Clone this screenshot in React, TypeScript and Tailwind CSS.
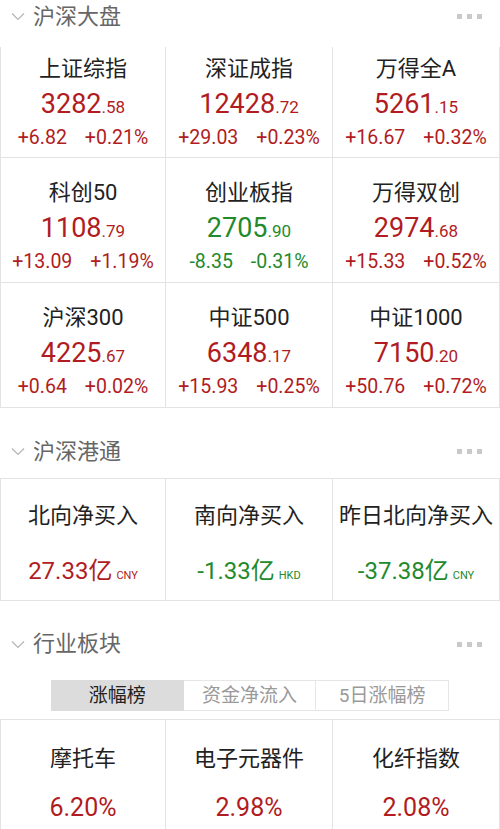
import React from "react";

const RED = "text-[#b01c22]";
const GREEN = "text-[#238a2c]";

type Idx = { name: string; int: string; dec: string; chg: string; pct: string; up: boolean };

const rows: Idx[][] = [
  [
    { name: "上证综指", int: "3282", dec: "58", chg: "+6.82", pct: "+0.21%", up: true },
    { name: "深证成指", int: "12428", dec: "72", chg: "+29.03", pct: "+0.23%", up: true },
    { name: "万得全A", int: "5261", dec: "15", chg: "+16.67", pct: "+0.32%", up: true },
  ],
  [
    { name: "科创50", int: "1108", dec: "79", chg: "+13.09", pct: "+1.19%", up: true },
    { name: "创业板指", int: "2705", dec: "90", chg: "-8.35", pct: "-0.31%", up: false },
    { name: "万得双创", int: "2974", dec: "68", chg: "+15.33", pct: "+0.52%", up: true },
  ],
  [
    { name: "沪深300", int: "4225", dec: "67", chg: "+0.64", pct: "+0.02%", up: true },
    { name: "中证500", int: "6348", dec: "17", chg: "+15.93", pct: "+0.25%", up: true },
    { name: "中证1000", int: "7150", dec: "20", chg: "+50.76", pct: "+0.72%", up: true },
  ],
];

function Chevron() {
  return (
    <svg width="14" height="9" viewBox="0 0 14 9" className="mr-[8px]">
      <path d="M1 1.5 L7 7.5 L13 1.5" fill="none" stroke="#b5b5b5" strokeWidth="1.2" />
    </svg>
  );
}

function Dots() {
  return (
    <div className="flex gap-[5px]">
      <div className="w-[5px] h-[5px] bg-[#c9c9c9]" />
      <div className="w-[5px] h-[5px] bg-[#c9c9c9]" />
      <div className="w-[5px] h-[5px] bg-[#c9c9c9]" />
    </div>
  );
}

function Header({ title, dots, cls }: { title: string; dots: boolean; cls: string }) {
  return (
    <div className={"flex items-center pl-[11px] pr-[18px] " + cls}>
      <Chevron />
      <div className="text-[22px] leading-[30px] text-[#666]">{title}</div>
      <div className="flex-1" />
      {dots && <Dots />}
    </div>
  );
}

function IndexCell({ d, pt, first }: { d: Idx; pt: string; first: boolean }) {
  const c = d.up ? RED : GREEN;
  return (
    <div
      className={
        "flex flex-col items-center border-r border-[#e3e3e3] " +
        pt +
        (first ? " border-l border-[#e3e3e3]" : "")
      }
    >
      <div className="text-[22px] leading-[30px] text-[#222]">{d.name}</div>
      <div className={"leading-[40px] whitespace-nowrap " + c}>
        <span className="text-[27px]">{d.int}</span>
        <span className="text-[17px]">.{d.dec}</span>
      </div>
      <div className={"flex gap-[18px] text-[19.5px] leading-[20px] whitespace-nowrap " + c}>
        <span>{d.chg}</span>
        <span>{d.pct}</span>
      </div>
    </div>
  );
}

export default function App() {
  return (
    <div
      className="w-[500px] h-[829px] overflow-hidden bg-white"
      style={{ fontFamily: 'Roboto, "Noto Sans CJK SC", sans-serif' }}
    >
      <Header title="沪深大盘" dots cls="h-[47px] pb-[14px]" />
      <div className="border-b border-[#e3e3e3]">
        {rows.map((r, i) => (
          <div
            key={i}
            className={
              "grid grid-cols-[166px_167px_167px] " +
              (i === 0 ? "h-[110px]" : "h-[125px] border-t border-[#e3e3e3]")
            }
          >
            {r.map((d, j) => (
              <IndexCell key={j} d={d} pt={i === 0 ? "pt-[7px]" : "pt-[20px]"} first={j === 0} />
            ))}
          </div>
        ))}
      </div>

      <Header title="沪深港通" dots cls="h-[70px] pt-[17px]" />
      <div className="grid grid-cols-[166px_167px_167px] h-[123px] border-y border-[#e3e3e3]">
        {[
          { n: "北向净买入", v: "27.33亿", u: "CNY", up: true },
          { n: "南向净买入", v: "-1.33亿", u: "HKD", up: false },
          { n: "昨日北向净买入", v: "-37.38亿", u: "CNY", up: false },
        ].map((d, j) => (
          <div
            key={j}
            className={
              "flex flex-col items-center pt-[22px] border-r border-[#e3e3e3]" +
              (j === 0 ? " border-l border-[#e3e3e3]" : "")
            }
          >
            <div className="text-[22px] leading-[30px] text-[#222] whitespace-nowrap">{d.n}</div>
            <div className={"mt-[23px] flex items-baseline leading-[34px] " + (d.up ? RED : GREEN)}>
              <span className="text-[24px]">{d.v}</span>
              <span className="text-[11px] ml-[4px]">{d.u}</span>
            </div>
          </div>
        ))}
      </div>

      <Header title="行业板块" dots cls="h-[79px] pt-[7px]" />
      <div className="mx-auto w-[398px] h-[31px] grid grid-cols-3 text-[19px] leading-[29px]">
        <div className="bg-[#dcdcdc] text-[#222] text-center border border-[#dcdcdc]">涨幅榜</div>
        <div className="text-[#9a9a9a] text-center border-y border-r border-[#e6e6e6]">资金净流入</div>
        <div className="text-[#9a9a9a] text-center border-y border-r border-[#e6e6e6]">5日涨幅榜</div>
      </div>
      <div className="mt-[8px] grid grid-cols-[166px_167px_167px] h-[140px] border-t border-[#e3e3e3]">
        {[
          { n: "摩托车", v: "6.20%" },
          { n: "电子元器件", v: "2.98%" },
          { n: "化纤指数", v: "2.08%" },
        ].map((d, j) => (
          <div
            key={j}
            className={
              "flex flex-col items-center pt-[24px] border-r border-[#e3e3e3]" +
              (j === 0 ? " border-l border-[#e3e3e3]" : "")
            }
          >
            <div className="text-[22px] leading-[30px] text-[#222]">{d.n}</div>
            <div className={"mt-[17px] text-[25px] leading-[34px] " + RED}>{d.v}</div>
          </div>
        ))}
      </div>
    </div>
  );
}
